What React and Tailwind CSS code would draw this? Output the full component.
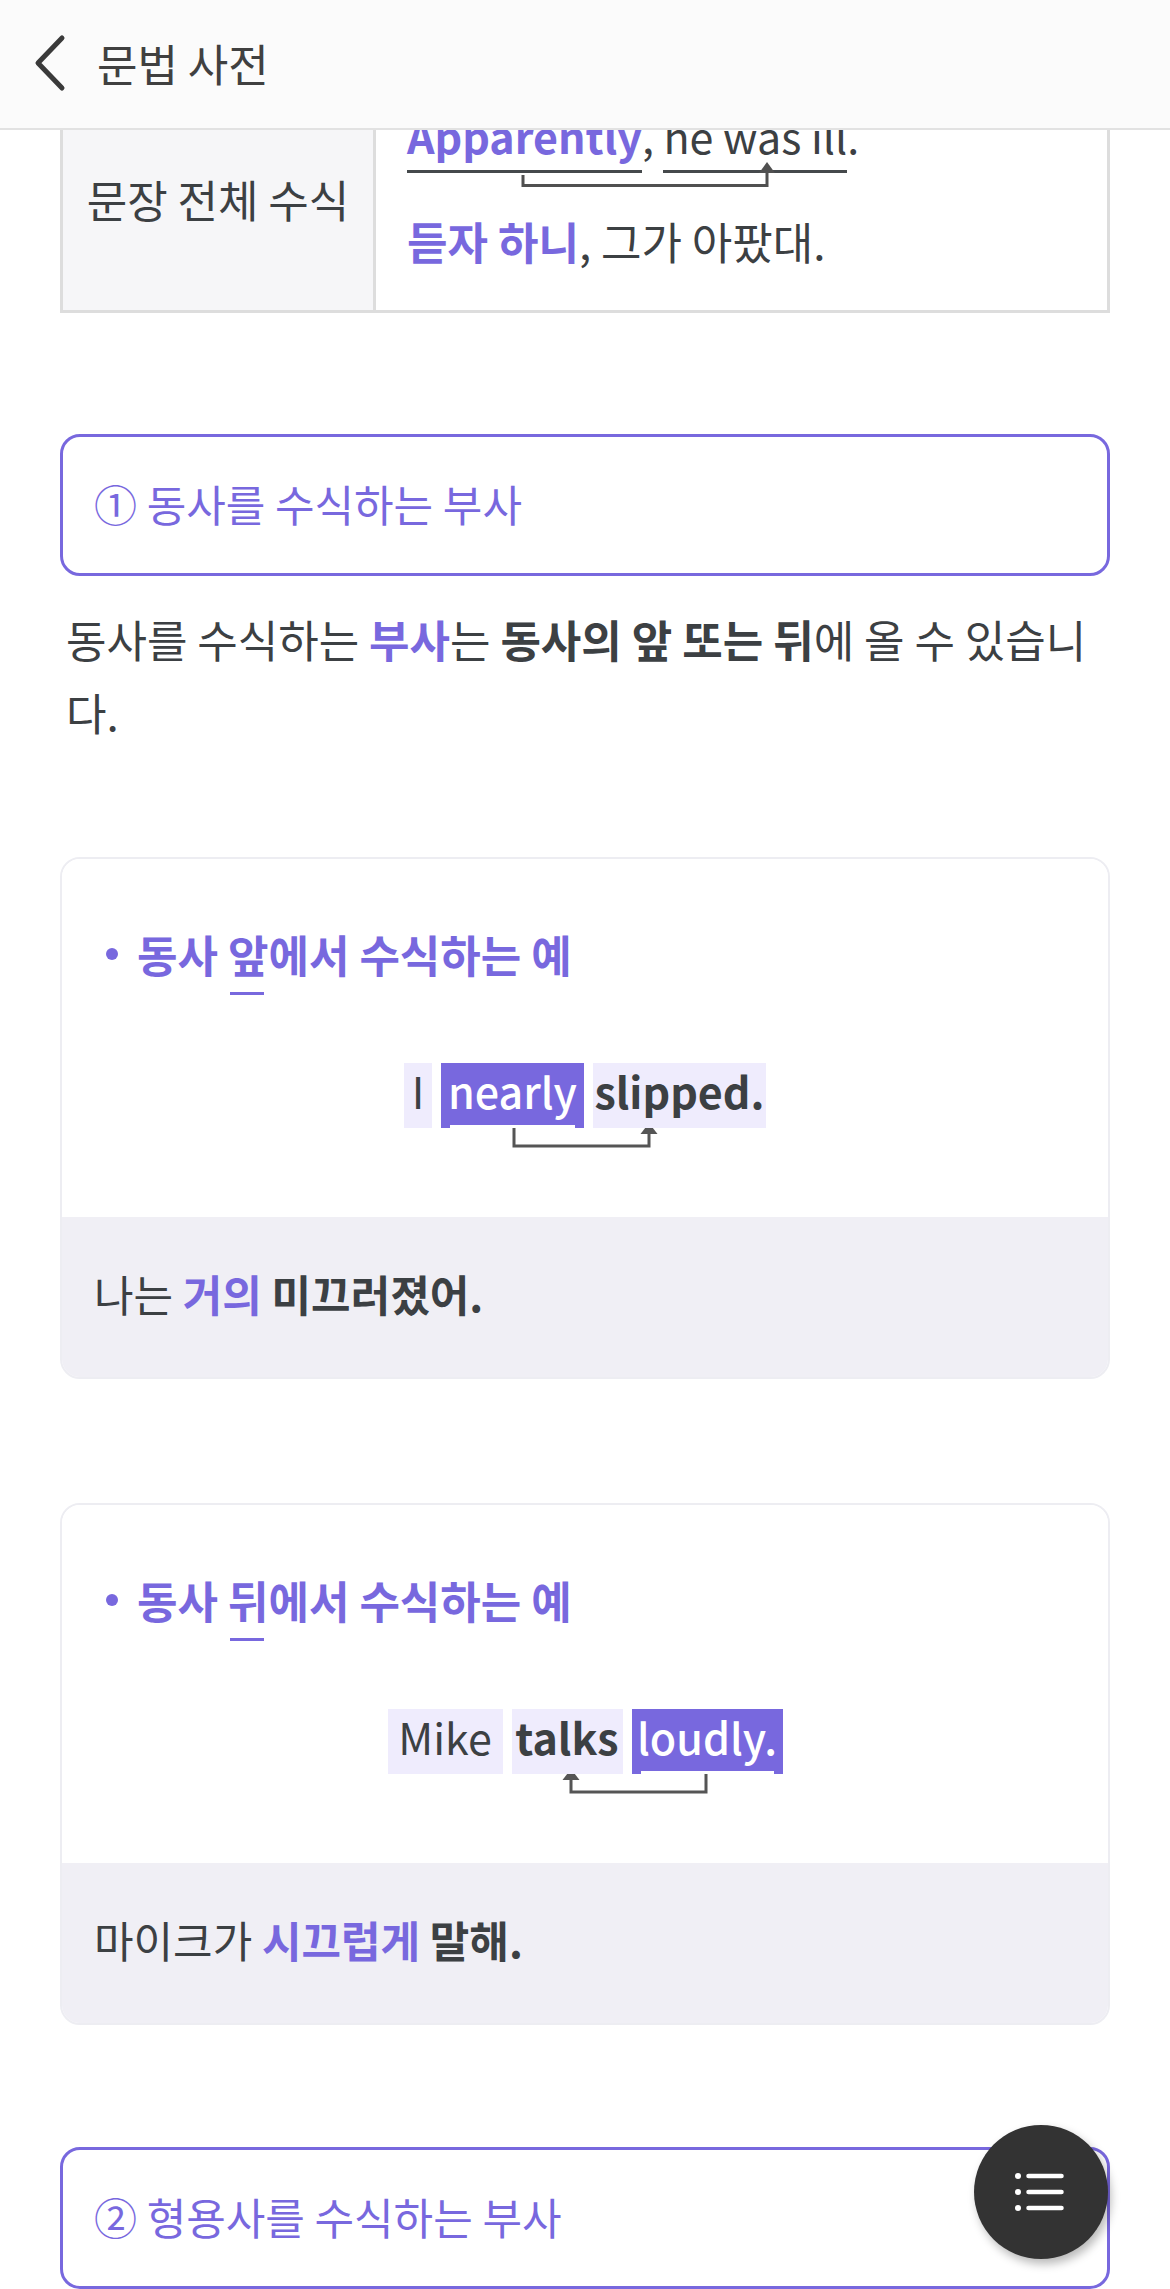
import React from 'react';

const Bracket = ({ width, from, to, arrowAt }) => {
  // from: x where the line leaves the modifier, to: x of the arrow (modified word)
  return (
    <svg width={width} height="28" viewBox={`0 0 ${width} 28`} className="-mt-[7px] block">
      <path d={`M${from} 7 V25 H${to} V12`} fill="none" stroke="#555555" strokeWidth="3" />
      <polygon points={`${arrowAt},2 ${arrowAt - 8.5},13 ${arrowAt + 8.5},13`} fill="#555555" />
    </svg>
  );
};

const Word = ({ className, mark, children }) => (
  <span className={`relative block h-[65px] pb-[10px] text-center text-[43px] leading-[55px] ${className}`}>
    {children}
    {mark && <span className="absolute bottom-0 left-[9px] right-[9px] h-[3px] bg-white" />}
  </span>
);

const ExampleCard = ({ before, mark, after, sentence, translation }) => (
  <div className="overflow-hidden rounded-[20px] border-2 border-[#ededf2]">
    <div className="bg-white pt-[65px] pb-[68px]">
      <div className="flex items-center pl-[44px] text-[44px] font-bold leading-[60px] text-[#7868de]">
        <span className="mr-[19px] h-[12px] w-[12px] rounded-full bg-[#7868de]" />
        <span className="whitespace-nowrap">
          {before}
          <span className="relative">
            {mark}
            <span className="absolute left-[2px] right-[4px] top-[70px] h-[3px] bg-[#7868de]" />
          </span>
          {after}
        </span>
      </div>
      <div className="mt-[79px] flex flex-col items-center">{sentence}</div>
    </div>
    <div className="bg-[#f0eff5] pt-[46px] pb-[54px] pl-[32px] text-[43px] leading-[60px]">
      {translation}
    </div>
  </div>
);

const SectionBox = ({ children }) => (
  <div className="flex h-[142px] items-center rounded-[20px] border-[3px] border-[#7868de] pb-[4px] pl-[31px] text-[43px] leading-[60px] text-[#7868de]">
    {children}
  </div>
);

export default function App() {
  return (
    <div className="relative h-[2289px] overflow-hidden bg-white font-['Noto_Sans_CJK_KR',sans-serif] text-[#3c4043]">
      {/* Header */}
      <header className="fixed inset-x-0 top-0 z-10 flex h-[130px] items-center border-b-2 border-[#e2e2e2] bg-[#fbfbfb] pb-[2px] pl-[32px]">
        <svg width="34" height="58" viewBox="0 0 34 58" className="shrink-0">
          <polyline points="30,4 6,29 30,54" fill="none" stroke="#3a3a3a" strokeWidth="5" strokeLinecap="round" strokeLinejoin="round" />
        </svg>
        <h1 className="ml-[31px] text-[44px] leading-[60px] text-[#404040]">문법 사전</h1>
      </header>

      <main className="px-[60px] pt-[84px]">
        {/* Table (scrolled, top row partly under header) */}
        <div className="flex border-[3px] border-[#dddddd]">
          <div className="flex w-[313px] shrink-0 items-center justify-center border-r-[3px] border-[#dddddd] bg-[#f6f6f8] text-[44px]">
            문장 전체 수식
          </div>
          <div className="flex-1 bg-white pt-[16px] pb-[40px] pl-[31px]">
            <div className="relative whitespace-nowrap text-[43px] leading-[64px]">
              <span className="border-b-[3px] border-[#45494c] pb-[4px] font-semibold text-[#7868de]">Apparently</span>
              <span>, </span>
              <span className="border-b-[3px] border-[#45494c] pb-[4px]">he was ill</span>
              <span>.</span>
              <svg width="380" height="32" viewBox="0 0 380 32" className="absolute left-0 top-[55px]">
                <path d="M116 17 V27.5 H360 V14" fill="none" stroke="#505050" strokeWidth="3" />
                <polygon points="360,4 352,15 368,15" fill="#505050" />
              </svg>
            </div>
            <p className="mt-[45px] text-[44px] leading-[58px]">
              <span className="font-bold text-[#7868de]">듣자 하니</span>, 그가 아팠대.
            </p>
          </div>
        </div>

        <div className="mt-[121px]">
          <SectionBox>① 동사를 수식하는 부사</SectionBox>
        </div>

        <p className="mt-[27px] pl-[6px] pr-[20px] text-[44px] leading-[73px]">
          <span>동사를 수식하는 </span>
          <span className="font-bold text-[#7868de]">부사</span>
          <span>는 </span>
          <span className="font-bold">동사의 앞 또는 뒤</span>
          <span>에 올 수 있습니</span>
          <span>다.</span>
        </p>

        <div className="mt-[108px]">
          <ExampleCard
            before="동사 "
            mark="앞"
            after="에서 수식하는 예"
            sentence={
              <>
                <div className="flex gap-[9px]">
                  <Word className="w-[28px] bg-[#efecfd]">I</Word>
                  <Word className="w-[143px] bg-[#7868de] font-medium text-white" mark>nearly</Word>
                  <Word className="w-[173px] bg-[#efecfd] font-semibold">slipped.</Word>
                </div>
                <Bracket width={362} from={110} to={245} arrowAt={245} />
              </>
            }
            translation={
              <>
                나는 <span className="font-bold text-[#7868de]">거의</span>{' '}
                <span className="font-bold">미끄러졌어.</span>
              </>
            }
          />
        </div>

        <div className="mt-[124px]">
          <ExampleCard
            before="동사 "
            mark="뒤"
            after="에서 수식하는 예"
            sentence={
              <>
                <div className="flex gap-[9px]">
                  <Word className="w-[115px] bg-[#efecfd]">Mike</Word>
                  <Word className="w-[111px] bg-[#efecfd] font-semibold">talks</Word>
                  <Word className="w-[151px] bg-[#7868de] font-medium text-white" mark>loudly.</Word>
                </div>
                <Bracket width={395} from={318} to={183} arrowAt={183} />
              </>
            }
            translation={
              <>
                마이크가 <span className="font-bold text-[#7868de]">시끄럽게</span>{' '}
                <span className="font-bold">말해.</span>
              </>
            }
          />
        </div>

        <div className="mt-[122px]">
          <SectionBox>② 형용사를 수식하는 부사</SectionBox>
        </div>
      </main>

      {/* Floating table-of-contents button */}
      <button className="fixed bottom-[30px] right-[62px] z-20 flex h-[134px] w-[134px] items-center justify-center rounded-full bg-[#333333] shadow-[3px_5px_10px_rgba(0,0,0,0.28)]">
        <svg width="52" height="38" viewBox="0 0 52 38">
          <g fill="#ffffff">
            <circle cx="3" cy="3" r="3" />
            <circle cx="3" cy="19" r="3" />
            <circle cx="3" cy="35" r="3" />
          </g>
          <g stroke="#ffffff" strokeWidth="4.5" strokeLinecap="round">
            <line x1="13.5" y1="3" x2="46.5" y2="3" />
            <line x1="13.5" y1="19" x2="46.5" y2="19" />
            <line x1="13.5" y1="35" x2="46.5" y2="35" />
          </g>
        </svg>
      </button>
    </div>
  );
}
